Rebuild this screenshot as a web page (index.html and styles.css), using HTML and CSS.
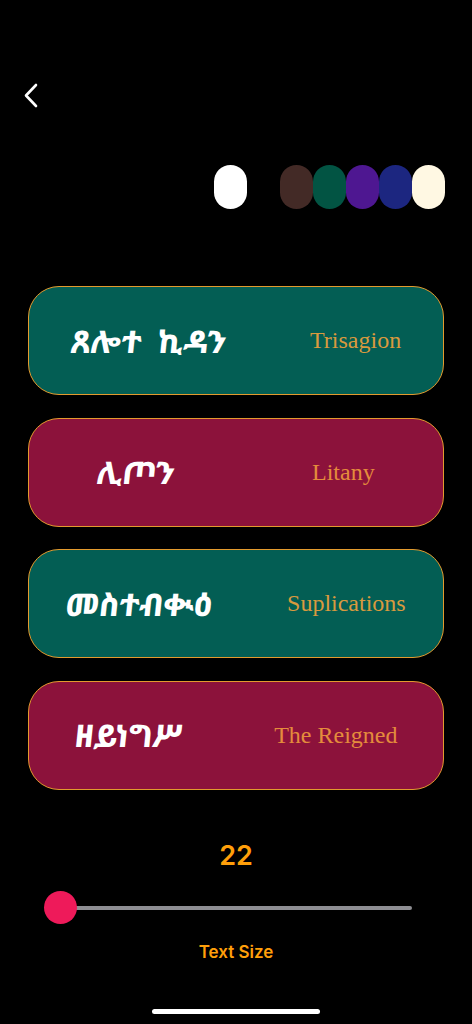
FILE: index.html
```html
<!DOCTYPE html>
<html lang="en">
<head>
<meta charset="utf-8">
<title>Prayers</title>
<link rel="stylesheet" href="styles.css">
</head>
<body>
<div class="screen">
  <header class="topbar">
    <button class="back" aria-label="Back">
      <svg width="16" height="26" viewBox="0 0 16 26"><path d="M12 2 L2 12.5 L12 23" fill="none" stroke="#fff" stroke-width="2.6" stroke-linecap="round" stroke-linejoin="round"/></svg>
    </button>
  </header>

  <div class="swatches">
    <span class="pill white"></span>
    <div class="pill-group">
      <span class="pill brown"></span>
      <span class="pill green"></span>
      <span class="pill purple"></span>
      <span class="pill navy"></span>
      <span class="pill cream"></span>
    </div>
  </div>

  <div class="cards">
    <div class="card teal"><span class="ge">ጸሎተ&nbsp; ኪዳን</span><span class="en">Trisagion</span></div>
    <div class="card wine"><span class="ge">ሊጦን</span><span class="en">Litany</span></div>
    <div class="card teal"><span class="ge">መስተብቊዕ</span><span class="en">Suplications</span></div>
    <div class="card wine"><span class="ge">ዘይነግሥ</span><span class="en">The Reigned</span></div>
  </div>

  <div class="size-value">22</div>
  <div class="slider">
    <div class="track"></div>
    <div class="thumb"></div>
  </div>
  <div class="size-label">Text Size</div>

  <div class="home-indicator"></div>
</div>
</body>
</html>
```

FILE: styles.css
```css
* { box-sizing: border-box; }
html, body { margin: 0; padding: 0; background: #000; }
body { font-family: Inter, "Liberation Sans", sans-serif; color: #fff; }
.screen { width: 472px; height: 1024px; position: relative; overflow: hidden; }

.topbar { height: 165px; padding: 83px 0 0 24px; }
.back { background: none; border: 0; padding: 0; width: 16px; height: 26px; display: block; cursor: pointer; }
.back svg { display: block; }

.swatches { display: flex; justify-content: flex-end; align-items: center; gap: 33px; padding-right: 27px; height: 44px; }
.pill-group { display: flex; }
.pill { display: block; width: 33px; height: 44px; border-radius: 16.5px; }
.pill.white { background: #ffffff; }
.pill.brown { background: #432a26; }
.pill.green { background: #025443; }
.pill.purple { background: #4e1791; }
.pill.navy { background: #1c2680; }
.pill.cream { background: #fff8e3; }

.cards { display: flex; flex-direction: column; gap: 22.5px; padding: 0 28px; margin-top: 77px; }
.card { height: 109px; border: 1.3px solid #e39a2e; border-radius: 31px; display: flex; align-items: center; justify-content: space-around; }
.card.teal { background: #035e54; }
.card.wine { background: #8c123b; }
.ge { font-family: "Noto Sans Ethiopic", "Abyssinica SIL", "FreeSerif", "DejaVu Sans", sans-serif; font-weight: 800; font-size: 31px; color: #fff; transform: skewX(-6deg); display: inline-block; }
.en { font-family: "Liberation Serif", serif; font-size: 24px; color: #d99a3e; font-weight: 400; }
.card.wine .en { color: #e48c3c; }

.size-value { margin-top: 50px; text-align: center; font-size: 27px; font-weight: 600; color: #ff9f0a; line-height: 32px; }
.slider { position: relative; height: 34px; margin: 19px 0 0 44px; width: 368px; }
.track { position: absolute; left: 16px; right: 0; top: 15px; height: 4px; border-radius: 2px; background: #8e8e93; }
.thumb { position: absolute; left: 0; top: 0; width: 33px; height: 33px; border-radius: 50%; background: #ee1a5a; }
.size-label { margin-top: 17px; text-align: center; font-size: 17px; font-weight: 600; color: #ff9f0a; line-height: 20px; }

.home-indicator { position: absolute; left: 152px; top: 1009px; width: 168px; height: 5px; border-radius: 3px; background: #fff; }
```
